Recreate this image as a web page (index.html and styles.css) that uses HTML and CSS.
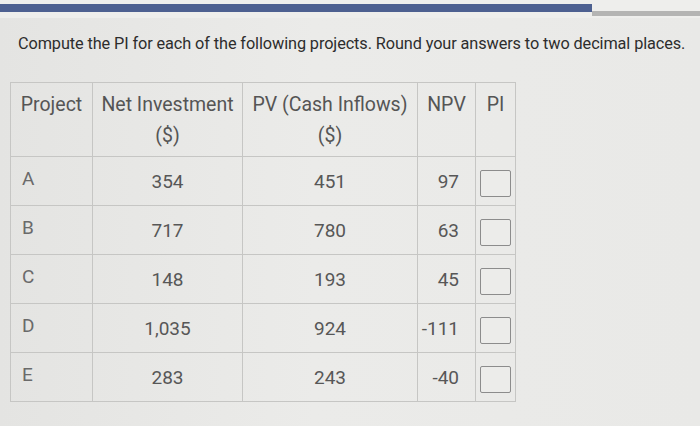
FILE: index.html
```html
<!DOCTYPE html>
<html>
<head>
<meta charset="utf-8">
<link rel="stylesheet" href="styles.css">
</head>
<body>
<div class="progress">
  <div class="progress-fill"></div>
  <div class="progress-rest"></div>
</div>
<p class="prompt">Compute the PI for each of the following projects. Round your answers to two decimal places.</p>
<table class="grid">
  <thead>
    <tr>
      <th class="c-proj">Project</th>
      <th class="c-inv">Net Investment<br>($)</th>
      <th class="c-pv">PV (Cash Inflows)<br>($)</th>
      <th class="c-npv">NPV</th>
      <th class="c-pi">PI</th>
    </tr>
  </thead>
  <tbody>
    <tr><td class="c-proj">A</td><td class="c-inv">354</td><td class="c-pv">451</td><td class="c-npv">97</td><td class="c-pi"><span class="box"></span></td></tr>
    <tr><td class="c-proj">B</td><td class="c-inv">717</td><td class="c-pv">780</td><td class="c-npv">63</td><td class="c-pi"><span class="box"></span></td></tr>
    <tr><td class="c-proj">C</td><td class="c-inv">148</td><td class="c-pv">193</td><td class="c-npv">45</td><td class="c-pi"><span class="box"></span></td></tr>
    <tr><td class="c-proj">D</td><td class="c-inv">1,035</td><td class="c-pv">924</td><td class="c-npv">-111</td><td class="c-pi"><span class="box"></span></td></tr>
    <tr><td class="c-proj">E</td><td class="c-inv">283</td><td class="c-pv">243</td><td class="c-npv">-40</td><td class="c-pi"><span class="box"></span></td></tr>
  </tbody>
</table>
</body>
</html>
```
FILE: styles.css
```css
html, body {
  margin: 0;
  padding: 0;
}
body {
  width: 700px;
  height: 426px;
  overflow: hidden;
  background: linear-gradient(90deg, #e4e4e2 0%, #ebebe9 45%, #e9e9e7 100%);
  font-family: Roboto, "Liberation Sans", sans-serif;
}
.progress {
  display: flex;
  align-items: flex-start;
  height: 18px;
  background: #eeeeec;
}
.progress-fill {
  width: 592px;
  height: 8px;
  margin-top: 4px;
  background: #4d6090;
}
.progress-rest {
  flex: 1;
  height: 5px;
  margin-top: 11px;
  background: #b4b4b3;
}
.prompt {
  margin: 16px 0 0 18px;
  font-size: 16.3px;
  color: #2d2d2d;
  letter-spacing: -0.1px;
  white-space: nowrap;
}
.grid {
  margin: 29px 0 0 10px;
  border-collapse: collapse;
  color: #575757;
  font-size: 19px;
}
.grid th, .grid td {
  border: 1px solid #c6c6c4;
  padding: 0;
  box-sizing: border-box;
}
.grid th {
  height: 74px;
  font-weight: normal;
  font-size: 19.5px;
  vertical-align: top;
  line-height: 31px;
  padding-top: 6px;
  color: #555;
}
.grid td {
  height: 49px;
  vertical-align: middle;
}
.c-proj { width: 82px; text-align: left; padding-left: 11px !important; }
th.c-proj { text-align: center; padding-left: 0 !important; }
.c-inv { width: 150px; text-align: center; }
.c-pv { width: 175px; text-align: center; }
.c-npv { width: 58px; text-align: right; padding-right: 16px !important; }
th.c-npv { text-align: center; padding-right: 0 !important; }
.c-pi { width: 40px; text-align: center; }
td.c-proj { color: #6a6a6a; padding-bottom: 6px !important; }
.box {
  display: inline-block;
  width: 29px;
  height: 25px;
  border: 1.5px solid #8c8c8c;
  border-radius: 2px;
  background: #ececea;
  vertical-align: middle;
  margin-top: 4px;
}
```
